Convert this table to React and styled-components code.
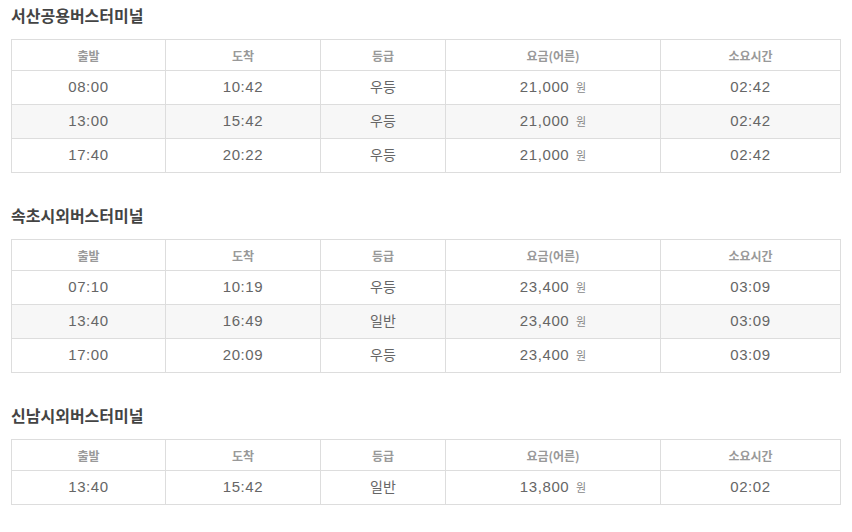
import styled, { createGlobalStyle } from "styled-components";

const GlobalStyle = createGlobalStyle`
  body {
    margin: 0;
    background: #fff;
    font-family: "Liberation Sans", "Noto Sans CJK KR", sans-serif;
  }
`;

const Page = styled.div`
  padding: 0 11px;
  width: 830px;
`;

const Section = styled.section`
  margin-bottom: 27px;
`;

const Title = styled.h3`
  margin: 0 0 9px;
  height: 30px;
  line-height: 30px;
  font-family: "Noto Sans CJK KR", sans-serif;
  font-size: 16px;
  font-weight: 700;
  color: #444;
`;

const Table = styled.table`
  width: 830px;
  table-layout: fixed;
  border-collapse: collapse;
`;

const Th = styled.th`
  height: 30px;
  padding: 0;
  border: 1px solid #ddd;
  font-family: "Noto Sans CJK KR", sans-serif;
  font-size: 12px;
  font-weight: 700;
  color: #999;
  text-align: center;
`;

const Tr = styled.tr`
  background: ${(p) => (p.$alt ? "#f7f7f7" : "#fff")};
`;

const Td = styled.td`
  height: 31px;
  padding: 0 0 2px;
  line-height: 16px;
  border: 1px solid #ddd;
  font-size: 15px;
  letter-spacing: 0.6px;
  color: #666;
  text-align: center;
`;

const Grade = styled.span`
  font-family: "Noto Sans CJK KR", sans-serif;
  font-size: 14px;
  letter-spacing: 0;
`;

const Won = styled.span`
  font-family: "Noto Sans CJK KR", sans-serif;
  font-size: 11px;
  letter-spacing: 0;
  color: #888;
  margin-left: 2px;
`;

const widths = [154, 155, 125, 215, 180];
const heads = ["출발", "도착", "등급", "요금(어른)", "소요시간"];

const terminals = [
  {
    name: "서산공용버스터미널",
    rows: [
      ["08:00", "10:42", "우등", "21,000", "02:42"],
      ["13:00", "15:42", "우등", "21,000", "02:42"],
      ["17:40", "20:22", "우등", "21,000", "02:42"],
    ],
  },
  {
    name: "속초시외버스터미널",
    rows: [
      ["07:10", "10:19", "우등", "23,400", "03:09"],
      ["13:40", "16:49", "일반", "23,400", "03:09"],
      ["17:00", "20:09", "우등", "23,400", "03:09"],
    ],
  },
  {
    name: "신남시외버스터미널",
    rows: [["13:40", "15:42", "일반", "13,800", "02:02"]],
  },
];

function Timetable({ terminal }) {
  return (
    <Section>
      <Title>{terminal.name}</Title>
      <Table>
        <colgroup>
          {widths.map((w, i) => (
            <col key={i} style={{ width: w }} />
          ))}
        </colgroup>
        <thead>
          <tr>
            {heads.map((h) => (
              <Th key={h}>{h}</Th>
            ))}
          </tr>
        </thead>
        <tbody>
          {terminal.rows.map((r, i) => (
            <Tr key={i} $alt={i % 2 === 1}>
              <Td>{r[0]}</Td>
              <Td>{r[1]}</Td>
              <Td>
                <Grade>{r[2]}</Grade>
              </Td>
              <Td>
                {r[3]} <Won>원</Won>
              </Td>
              <Td>{r[4]}</Td>
            </Tr>
          ))}
        </tbody>
      </Table>
    </Section>
  );
}

export default function App() {
  return (
    <>
      <GlobalStyle />
      <Page>
        {terminals.map((t) => (
          <Timetable key={t.name} terminal={t} />
        ))}
      </Page>
    </>
  );
}
